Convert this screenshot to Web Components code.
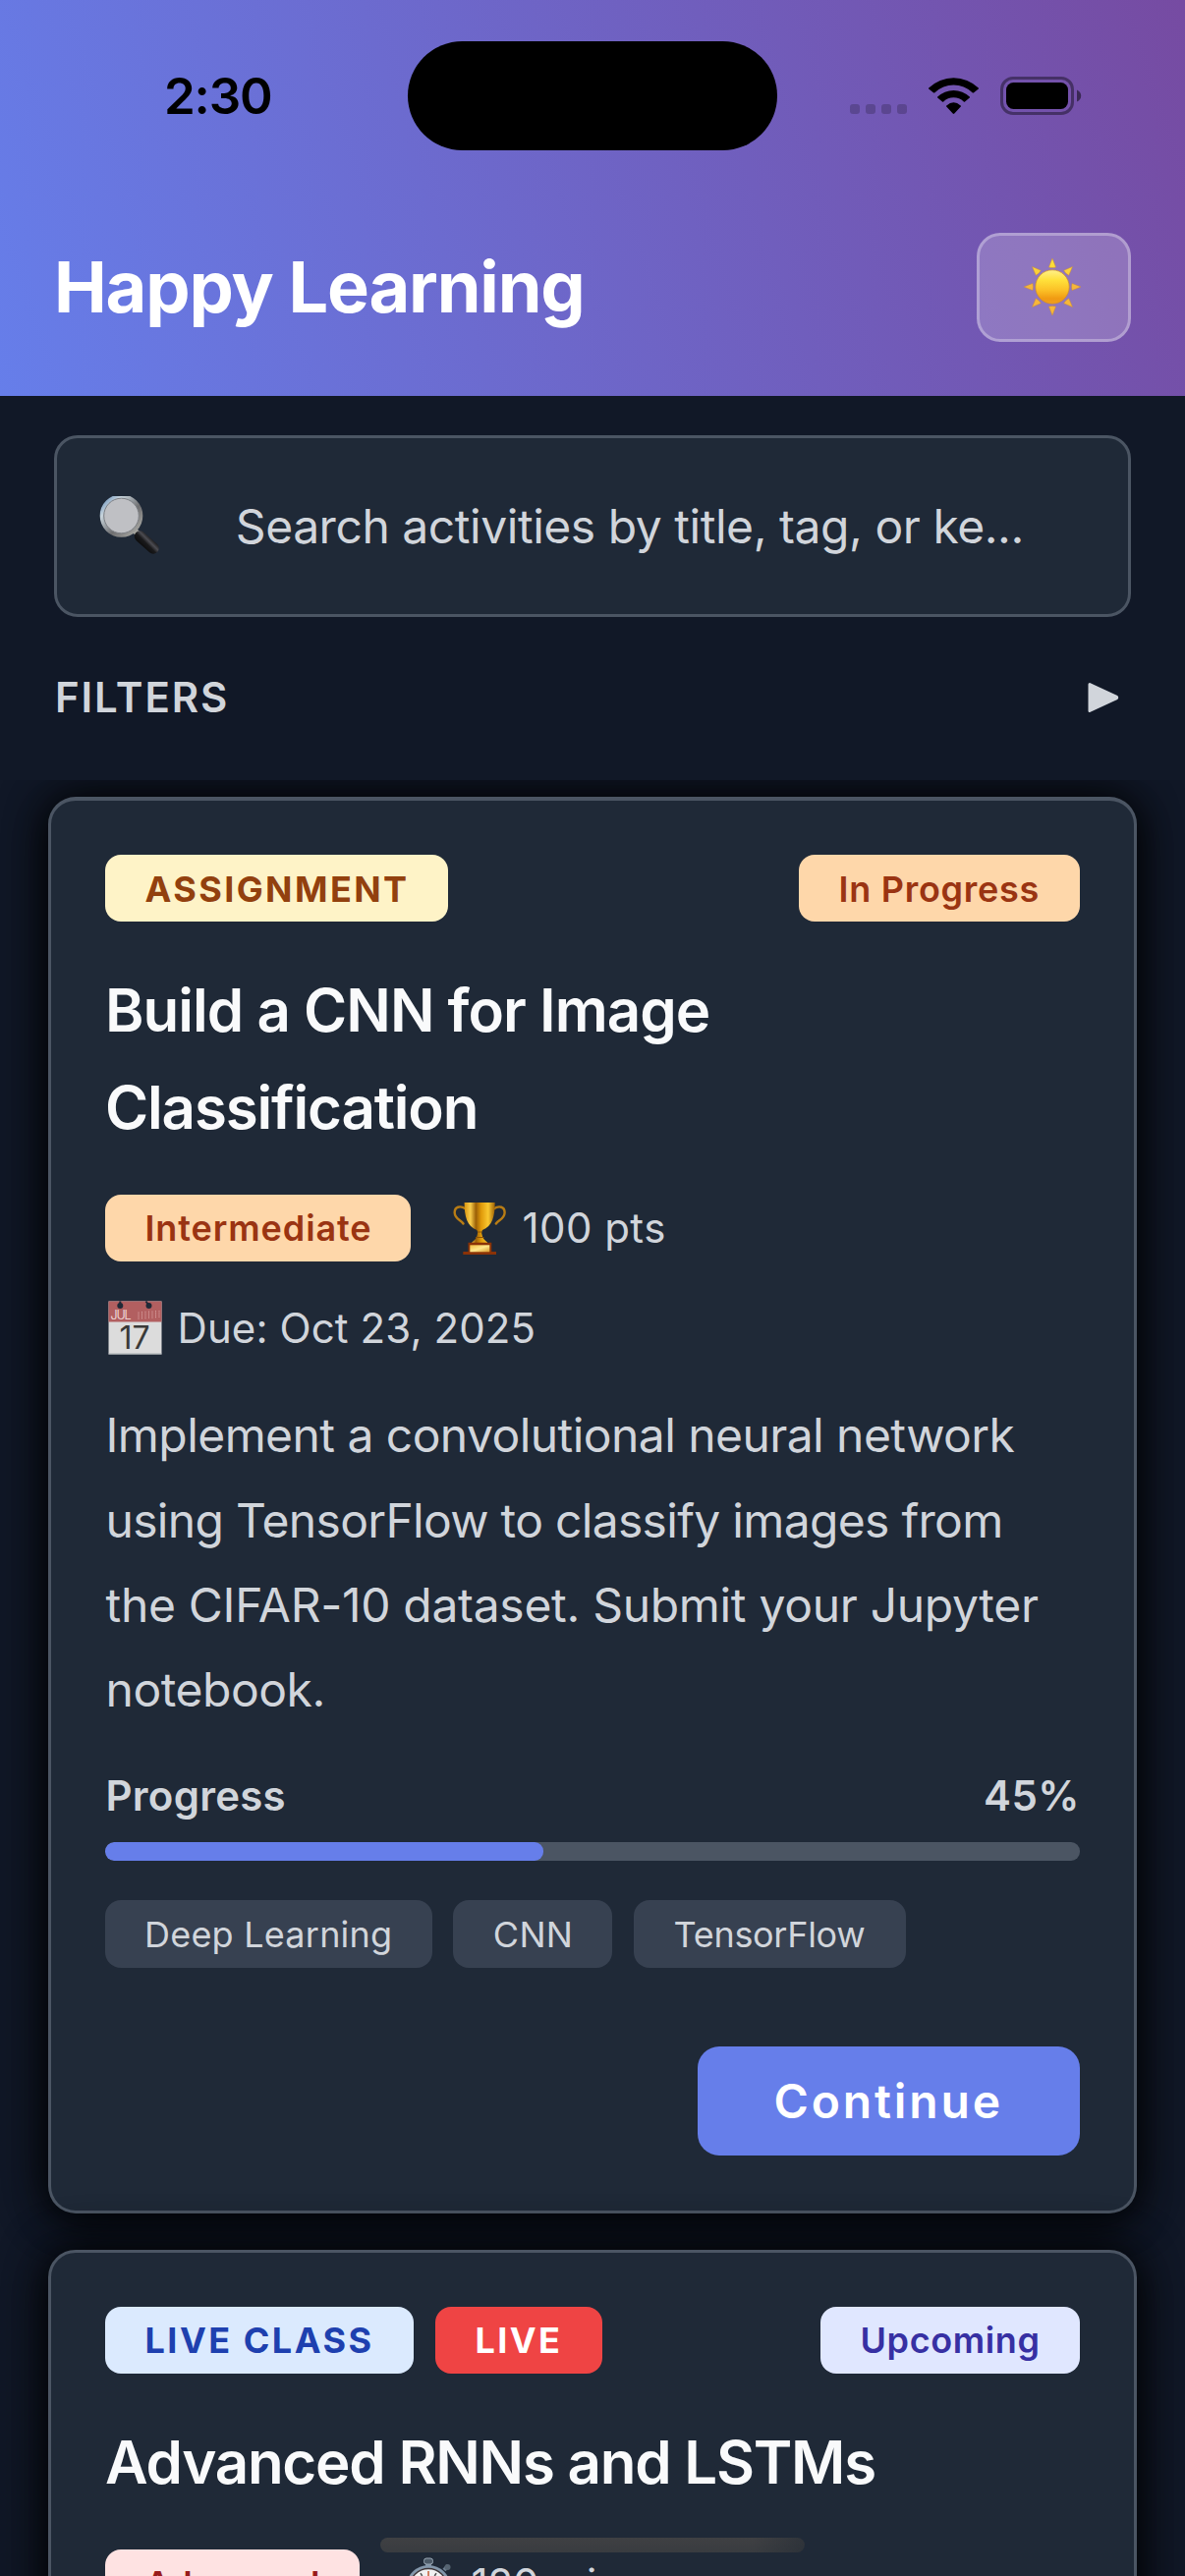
<!DOCTYPE html>
<html lang="en">
<head>
<meta charset="utf-8">
<title>Happy Learning</title>
<style>
  html, body { margin: 0; padding: 0; background: #111827; }
  body { width: 1206px; height: 2622px; overflow: hidden; position: relative; font-family: Inter, "Liberation Sans", sans-serif; }
</style>
</head>
<body>
<learning-app></learning-app>

<template id="t-app">
  <style>
    :host { display: flex; flex-direction: column; width: 1206px; height: 2622px; overflow: hidden; background: #111827; }
    .list { flex: 1; min-height: 0; overflow: hidden; display: flex; flex-direction: column; gap: 37px; padding: 17px 49px 0; }
    .line { display: block; white-space: nowrap; }
  </style>
  <app-header></app-header>
  <search-box>Search activities by title, tag, or ke...</search-box>
  <filter-bar>FILTERS</filter-bar>
  <div class="list">
    <activity-card style="--top:4px">
      <pill-badge slot="type" w="349" style="--bg:#fef3c7;--fg:#92400e;--wt:700;--ls:2.4px">ASSIGNMENT</pill-badge>
      <pill-badge slot="status" w="286" style="--bg:#fed7aa;--fg:#9a3412;--ls:.72px">In Progress</pill-badge>
      <span slot="title" class="line" style="letter-spacing:-.97px">Build a CNN for Image</span>
      <span slot="title" class="line" style="letter-spacing:-1.16px">Classification</span>
      <pill-badge slot="meta" w="311" style="--bg:#fed7aa;--fg:#9a3412;--ls:.9px">Intermediate</pill-badge>
      <meta-item slot="meta" icon="trophy" style="letter-spacing:.45px">100 pts</meta-item>
      <meta-item slot="meta" icon="calendar" style="letter-spacing:.1px">Due: Oct 23, 2025</meta-item>
      <activity-body slot="body">
        <span class="line" style="letter-spacing:-.56px">Implement a convolutional neural network</span>
        <span class="line" style="letter-spacing:-.69px">using TensorFlow to classify images from</span>
        <span class="line" style="letter-spacing:-.31px">the CIFAR-10 dataset. Submit your Jupyter</span>
        <span class="line" style="letter-spacing:-.46px">notebook.</span>
        <progress-meter slot="progress" value="45"></progress-meter>
        <pill-badge slot="tags" w="333" pad="40" style="--bg:#374151;--fg:#d1d5db;--wt:400;--ls:.22px">Deep Learning</pill-badge>
        <pill-badge slot="tags" w="162" pad="40.5" style="--bg:#374151;--fg:#d1d5db;--wt:400;--ls:.3px">CNN</pill-badge>
        <pill-badge slot="tags" w="277" pad="41" style="--bg:#374151;--fg:#d1d5db;--wt:400;--ls:-.3px">TensorFlow</pill-badge>
        <action-button slot="action">Continue</action-button>
      </activity-body>
    </activity-card>
    <activity-card>
      <pill-badge slot="type" w="314" style="--bg:#dbeafe;--fg:#1e40af;--wt:700;--ls:2.5px">LIVE CLASS</pill-badge>
      <pill-badge slot="type" w="170" style="--bg:#ef4444;--fg:#fff;--wt:700;--ls:2.4px">LIVE</pill-badge>
      <pill-badge slot="status" w="264" style="--bg:#e0e7ff;--fg:#3730a3;--ls:.61px">Upcoming</pill-badge>
      <span slot="title" class="line" style="letter-spacing:-1.24px">Advanced RNNs and LSTMs</span>
      <pill-badge slot="meta" w="259" style="--bg:#fee2e2;--fg:#991b1b;--ls:.2px">Advanced</pill-badge>
      <meta-item slot="meta" icon="stopwatch" style="letter-spacing:-.05px">120 min</meta-item>
    </activity-card>
  </div>
  <home-indicator></home-indicator>
</template>

<template id="t-header">
  <style>
    :host { display: block; height: 403px; flex: none; background: linear-gradient(71.52deg, #667eea, #764ba2); }
    .row { display: flex; align-items: center; justify-content: space-between; margin: 44px 55px 0; height: 111px; }
    h1 { margin: 0 0 1px; font-size: 72px; line-height: 88px; font-weight: 700; letter-spacing: -1.17px; color: #fff; white-space: nowrap; }
    button { display: flex; align-items: center; justify-content: center; box-sizing: border-box; width: 157px; height: 111px; padding: 0 3px 2px 0; border: 3px solid rgba(255,255,255,.3); border-radius: 24px; background: rgba(255,255,255,.2); }
    svg { display: block; }
  </style>
  <status-bar>2:30</status-bar>
  <div class="row">
    <h1>Happy Learning</h1>
    <button aria-label="Theme">
      <svg width="60" height="60" viewBox="-30 -30 60 60">
        <defs>
          <linearGradient id="s" x1="0" y1="0" x2="0" y2="1"><stop offset="0" stop-color="#fff08a"/><stop offset=".3" stop-color="#ffe03a"/><stop offset=".6" stop-color="#fbc026"/><stop offset=".85" stop-color="#f09a12"/><stop offset="1" stop-color="#f0a020"/></linearGradient>
          <linearGradient id="r" gradientUnits="userSpaceOnUse" x1="0" y1="-29" x2="0" y2="29"><stop offset="0" stop-color="#ffe838"/><stop offset=".5" stop-color="#f6b53a"/><stop offset="1" stop-color="#f8b838"/></linearGradient>
        </defs>
        <path fill="url(#r)" stroke="#c98a3a" stroke-width=".5" d="M0-29L3.6-20Q0-18.800-3.6-20ZM0 29L3.600 20Q0 18.800-3.600 20ZM-29 0L-20-3.600Q-19 0-20 3.600ZM29 0L20-3.600Q19 0 20 3.600ZM-20.500-20.500L-11.700-16.800Q-13.200-13.500-16.800-11.700ZM20.500-20.500L11.700-16.800Q13.200-13.500 16.800-11.700ZM-20.500 20.500L-11.700 16.800Q-13.200 13.500-16.800 11.700ZM20.500 20.500L11.700 16.800Q13.200 13.500 16.800 11.700Z"/>
        <circle r="17.200" fill="url(#s)" stroke="#d08c28" stroke-width=".7"/>
      </svg>
    </button>
  </div>
</template>

<template id="t-status">
  <style>
    :host { display: flex; align-items: center; height: 193px; }
    .time { width: 248px; padding-left: 167px; font-size: 51px; line-height: 60px; padding-top: 2px; font-weight: 600; letter-spacing: -1.16px; color: #000; }
    .island { width: 376px; height: 111px; border-radius: 56px; background: #000; margin-top: 1px; }
    .icons { flex: 1; padding-left: 74px; padding-top: 2px; display: flex; }
    svg { display: block; }
  </style>
  <div class="time"><slot></slot></div>
  <div class="island"></div>
  <div class="icons">
    <svg width="240" height="41" viewBox="865 77 240 41">
      <g fill="#000" fill-opacity=".2"><rect x="865" y="106" width="10" height="10" rx="3"/><rect x="881" y="106" width="10" height="10" rx="3"/><rect x="897" y="106" width="10" height="10" rx="3"/><rect x="913" y="106" width="10" height="10" rx="3"/></g>
      <path d="M945.200 89.500A36.300 36.300 0 0 1 995.800 89.500Q996.200 90 995.800 90.500L990.800 94.500Q990.200 94.800 989.600 94.200A27.500 27.500 0 0 0 951.400 94.200Q950.800 94.800 950.200 94.500L945.200 90.500Q944.800 90 945.200 89.500ZM954.200 98.500A23.500 23.500 0 0 1 986.800 98.500Q987.300 99 986.800 99.500L982 103.500Q981.400 104 980.800 103.400A15 15 0 0 0 960.200 103.400Q959.600 104 959 103.500L954.200 99.500Q953.700 99 954.200 98.500ZM963.300 107.500Q970.500 101.200 977.700 107.500Q978.300 108.100 977.800 108.600L971.300 115.500Q970.500 116.300 969.700 115.500L963.200 108.600Q962.700 108.100 963.300 107.500Z"/>
      <rect x="1019.500" y="79.500" width="72" height="36" rx="11.500" fill="none" stroke="#000" stroke-opacity=".4" stroke-width="3"/>
      <rect x="1024" y="84" width="63" height="27" rx="7.500"/>
      <path d="M1096 91.500Q1100.200 93.500 1100.200 97.500T1096 103.500Z" fill-opacity=".5"/>
    </svg>
  </div>
</template>

<template id="t-search">
  <style>
    :host { display: flex; align-items: center; gap: 75px; flex: none; box-sizing: border-box; height: 185px; margin: 40px 55px 0; padding-left: 42px; border: 3px solid #4b5563; border-radius: 24px; background: #1f2937; color: #d1d5db; font-size: 48px; line-height: 60px; letter-spacing: -.46px; white-space: nowrap; }
    svg { display: block; flex: none; }
    span { padding-left: .8px; }
  </style>
  <svg width="64" height="66" viewBox="100 503 64 66">
    <defs>
      <linearGradient id="rim" x1="0" y1="0" x2="1" y2="1"><stop offset="0" stop-color="#5b88b8"/><stop offset=".25" stop-color="#c8d4dc"/><stop offset=".6" stop-color="#6e6e70"/><stop offset="1" stop-color="#b4b4ae"/></linearGradient>
      <linearGradient id="hd" gradientUnits="userSpaceOnUse" x1="144" y1="560" x2="156" y2="548"><stop offset="0" stop-color="#050505"/><stop offset=".5" stop-color="#1a1a1c"/><stop offset=".7" stop-color="#4c4c52"/><stop offset="1" stop-color="#0c0c0c"/></linearGradient>
      <clipPath id="c"><rect x="100" y="505" width="64" height="64"/></clipPath>
    </defs>
    <g clip-path="url(#c)">
      <path d="M136.500 539.500L142 545" stroke="#a9a9a2" stroke-width="6"/>
      <path d="M142.500 546L156 558" stroke="url(#hd)" stroke-width="11.500" stroke-linecap="round"/>
      <circle cx="123.500" cy="525" r="19.800" fill="#bfc0c4" stroke="url(#rim)" stroke-width="4"/>
      <circle cx="123.500" cy="525" r="17.800" fill="none" stroke="#7c7f84" stroke-width="1"/>
    </g>
  </svg>
  <span><slot></slot></span>
</template>

<template id="t-filter">
  <style>
    :host { display: flex; align-items: center; justify-content: space-between; flex: none; box-sizing: border-box; height: 166px; padding: 0 67px 2px 56px; color: #d1d5db; font-size: 42px; line-height: 52px; font-weight: 600; letter-spacing: 1.88px; }
    svg { display: block; }
  </style>
  <span><slot></slot></span>
  <svg width="33" height="32" viewBox="0 0 33 32"><path d="M3 2.500L30 15Q31.500 16 30 17L3 29.500Z" fill="#d1d5db" stroke="#d1d5db" stroke-width="3" stroke-linejoin="round"/></svg>
</template>

<template id="t-card">
  <style>
    :host { display: block; flex: none; box-sizing: border-box; border: 3px solid #4b5563; border-top-width: var(--top, 3px); border-radius: 28px; padding: 55px 55px 56px; background: #1f2937;
      box-shadow: 0 0 48px rgba(0,0,0,.95), 0 0 48px rgba(0,0,0,.25), 0 12px 36px rgba(0,0,0,.3); }
    .head { display: flex; justify-content: space-between; height: 68.5px; }
    .types { display: flex; gap: 22px; }
    h2 { margin: 40.800px 0 0; font-size: 60px; line-height: 98.400px; font-weight: 600; color: #f9fafb; }
    .meta { margin-top: 39.800px; display: flex; flex-wrap: wrap; gap: 33.500px 40px; }
  </style>
  <div class="head"><div class="types"><slot name="type"></slot></div><slot name="status"></slot></div>
  <h2><slot name="title"></slot></h2>
  <div class="meta"><slot name="meta"></slot></div>
  <slot name="body"></slot>
</template>

<template id="t-body">
  <style>
    :host { display: block; }
    .text { margin-top: 32.300px; padding-left: .500px; font-size: 48px; line-height: 86.400px; color: #d1d5db; }
    .tags { margin-top: 40px; display: flex; gap: 21.300px; }
    .actions { margin-top: 80px; display: flex; justify-content: flex-end; }
  </style>
  <div class="text"><slot></slot></div>
  <slot name="progress"></slot>
  <div class="tags"><slot name="tags"></slot></div>
  <div class="actions"><slot name="action"></slot></div>
</template>

<template id="t-pill">
  <style>
    :host { display: block; box-sizing: border-box; height: 68.400px; padding-top: 1.500px; border-radius: 16px; background: var(--bg); color: var(--fg); font-size: 36px; line-height: 67.500px; font-weight: var(--wt, 600); letter-spacing: var(--ls, 0); white-space: nowrap; }
  </style>
  <slot></slot>
</template>

<template id="t-meta">
  <style>
    :host { display: flex; align-items: center; gap: 13.500px; height: 68px; color: #d1d5db; font-size: 42px; line-height: 68px; white-space: nowrap; }
    svg { display: none; flex: none; }
    :host([icon=trophy]) .trophy, :host([icon=calendar]) .calendar, :host([icon=stopwatch]) .stopwatch { display: block; }
    .label { padding-top: 1px; }
    text { font-family: Inter, "Liberation Sans", sans-serif; letter-spacing: 0; }
  </style>
  <svg class="trophy" width="60" height="68" viewBox="0 0 60 68">
    <defs>
      <linearGradient id="g"><stop offset="0" stop-color="#d89410"/><stop offset=".2" stop-color="#f8cc4a"/><stop offset=".38" stop-color="#9c6006"/><stop offset=".55" stop-color="#e09a0a"/><stop offset=".78" stop-color="#fac830"/><stop offset="1" stop-color="#9c6006"/></linearGradient>
      <linearGradient id="p" x2="1" y2="1"><stop offset="0" stop-color="#f0bc40"/><stop offset=".5" stop-color="#ffe78c"/><stop offset="1" stop-color="#d89a2c"/></linearGradient>
    </defs>
    <path d="M16 14.500C10 10.500 4.500 12.500 4.700 18.500C5 25 11 25.500 13.500 29.500M44.300 14.500C50.300 10.500 55.800 12.500 55.600 18.500C55.300 25 49.300 25.500 46.800 29.500" fill="none" stroke="#b87c14" stroke-width="2.400" stroke-linecap="round"/>
    <path d="M14.600 8H45.700C45.700 22 43 32.500 33 36C32 38 32 39 32.500 40.500C33 44 35 46 38 48.500V50H22.300V48.500C25.300 46 27.300 44 27.800 40.500C28.300 39 28.300 38 27.300 36C17.300 32.500 14.600 22 14.600 8Z" fill="url(#g)"/>
    <path d="M26 43.500H34.500M28 38H32.500" stroke="#8c5206" stroke-width="1"/>
    <path d="M18.500 48.800H42.300V58H47V61H13.300V58H18.500Z" fill="#8a3207"/>
    <rect x="20.300" y="51.300" width="20" height="7" fill="url(#p)"/>
  </svg>
  <svg class="calendar" width="60" height="68" viewBox="0 0 60 68">
    <rect x="3.500" y="6.500" width="54" height="54" fill="#dcdcdc"/>
    <rect x="3.500" y="6.500" width="54" height="21" fill="#b25f60"/>
    <path d="M3.500 60H57.500" stroke="#a8adb2" stroke-width="1.200"/>
    <circle cx="15.300" cy="11" r="3" fill="#1f2937"/><circle cx="44.500" cy="11" r="3" fill="#1f2937"/>
    <path d="M15.300 6.500V10M41.500 6.500L44 10" stroke="#1f2937" stroke-width="2"/>
    <path d="M34 17.500V25M37.500 17V25M41 16.800V25M44.500 16.500V24.500M48 16.500V24M51.500 16V23.500M55 16V23" stroke="#d79c9c" stroke-width="1" stroke-dasharray="1.300 .7"/>
    <text x="5.500" y="24.500" font-size="12.500" textLength="21" fill="#ecd0d0">JUL</text>
    <text x="14.500" y="54.500" font-size="32" font-weight="400" textLength="31" fill="#3a3a38">17</text>
  </svg>
  <svg class="stopwatch" width="60" height="68" viewBox="0 0 60 68">
    <rect x="27" y="12" width="6" height="6" fill="#7d8ea0"/>
    <rect x="25.500" y="9" width="9" height="6" rx="2.500" fill="#4c5a68" stroke="#9aa8b5" stroke-width="1"/>
    <path d="M46 21L50 16.500" stroke="#6f7f90" stroke-width="4"/><circle cx="49.500" cy="18" r="3" fill="#566472"/>
    <circle cx="30" cy="38.500" r="21" fill="#f1f1f1" stroke="#8397ab" stroke-width="3"/>
    <circle cx="30" cy="38.500" r="19" fill="none" stroke="#3c3438" stroke-width="1.500"/>
    <path d="M30 22V27M22 24.200L23.700 27M38 24.200L36.300 27" stroke="#555" stroke-width="1.500"/>
    <path d="M30 22V40" stroke="#e8825c" stroke-width="1.600"/>
  </svg>
  <span class="label"><slot></slot></span>
</template>

<template id="t-progress">
  <style>
    :host { display: block; margin-top: 34px; color: #d1d5db; font-size: 42px; line-height: 60px; font-weight: 600; }
    .head { display: flex; justify-content: space-between; padding-left: .500px; letter-spacing: .24px; }
    .value { letter-spacing: .5px; }
    .track { margin-top: 17.500px; height: 19px; border-radius: 9px; background: #4b5563; overflow: hidden; }
    .fill { height: 100%; border-radius: 9px; background: #667eea; }
  </style>
  <div class="head"><span>Progress</span><span class="value"></span></div>
  <div class="track"><div class="fill"></div></div>
</template>

<template id="t-action">
  <style>
    :host { display: block; box-sizing: border-box; width: 389px; height: 111px; padding-left: 77.500px; border-radius: 22px; background: #667eea; color: #fff; font-size: 48px; line-height: 111px; font-weight: 600; letter-spacing: 2.850px; white-space: nowrap; }
  </style>
  <slot></slot>
</template>

<template id="t-home">
  <style>
    :host { position: absolute; left: 387px; top: 2583px; width: 432px; height: 15px; border-radius: 8px; background: linear-gradient(90deg, rgba(0,0,0,0) 88%, rgba(32,40,50,.5)), linear-gradient(#3f4043, #393c40); }
  </style>
</template>

<script>
  const define = (name, id, setup) => customElements.define(name, class extends HTMLElement {
    constructor() {
      super();
      this.attachShadow({ mode: 'open' }).append(document.getElementById(id).content.cloneNode(true));
    }
    connectedCallback() { if (setup) setup(this); }
  });
  define('home-indicator', 't-home');
  define('action-button', 't-action');
  define('progress-meter', 't-progress', el => {
    const v = el.getAttribute('value') + '%';
    el.shadowRoot.querySelector('.value').textContent = v;
    el.shadowRoot.querySelector('.fill').style.width = v;
  });
  define('pill-badge', 't-pill', el => {
    el.style.width = el.getAttribute('w') + 'px';
    el.style.paddingLeft = (el.getAttribute('pad') || 40.5) + 'px';
  });
  define('meta-item', 't-meta');
  define('activity-body', 't-body');
  define('activity-card', 't-card');
  define('filter-bar', 't-filter');
  define('search-box', 't-search');
  define('status-bar', 't-status');
  define('app-header', 't-header');
  define('learning-app', 't-app');
</script>
</body>
</html>
